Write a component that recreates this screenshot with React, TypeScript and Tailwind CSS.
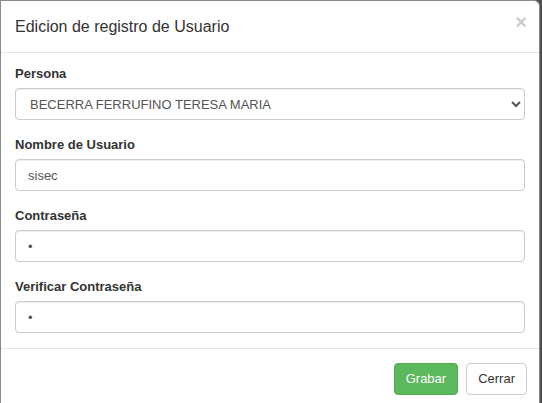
const FONT = { fontFamily: '"Liberation Sans", Arial, sans-serif' };

function Field({ label, children }: { label: string; children: React.ReactNode }) {
  return (
    <div className="mb-[15px] last:mb-0">
      <label className="mb-[5px] block text-[13px] leading-[19px] font-bold text-[#333]">{label}</label>
      {children}
    </div>
  );
}

const inputCls =
  "block h-[32px] w-full rounded-[4px] border border-[#ccc] bg-white px-[12px] text-[13px] text-[#555] shadow-[inset_0_1px_1px_rgba(0,0,0,0.075)] outline-none";

export default function App() {
  return (
    <div className="h-[403px] w-[542px] overflow-hidden bg-[#4f4f4f]" style={FONT}>
      <div className="w-[540px] rounded-tr-[6px] border-t border-r border-l border-[#8a8a8a] bg-white">
        <div className="flex items-start justify-between border-b border-[#e5e5e5] px-[14px] pt-[14px] pb-[13px]">
          <h4 className="text-[16px] leading-[24px] text-[#333]">Edicion de registro de Usuario</h4>
          <button className="mt-[-3px] mr-[-2px] text-[20px] leading-[20px] font-bold text-black opacity-20">×</button>
        </div>
        <div className="px-[14px] pt-[11px] pb-[15px]">
          <Field label="Persona">
            <select className={inputCls + " pl-[10px]"} defaultValue="1">
              <option value="1">BECERRA FERRUFINO TERESA MARIA</option>
            </select>
          </Field>
          <Field label="Nombre de Usuario">
            <input className={inputCls} defaultValue="sisec" />
          </Field>
          <Field label="Contraseña">
            <input type="password" className={inputCls} defaultValue="1" />
          </Field>
          <Field label="Verificar Contraseña">
            <input type="password" className={inputCls} defaultValue="1" />
          </Field>
        </div>
        <div className="flex justify-end gap-[8px] border-t border-[#e5e5e5] px-[12px] pt-[14px] pb-[14px]">
          <button className="h-[32px] rounded-[4px] border border-[#4cae4c] bg-[#5cb85c] px-[11px] text-[13px] text-white">
            Grabar
          </button>
          <button className="h-[32px] rounded-[4px] border border-[#ccc] bg-white px-[11px] text-[13px] text-[#333]">
            Cerrar
          </button>
        </div>
      </div>
    </div>
  );
}
